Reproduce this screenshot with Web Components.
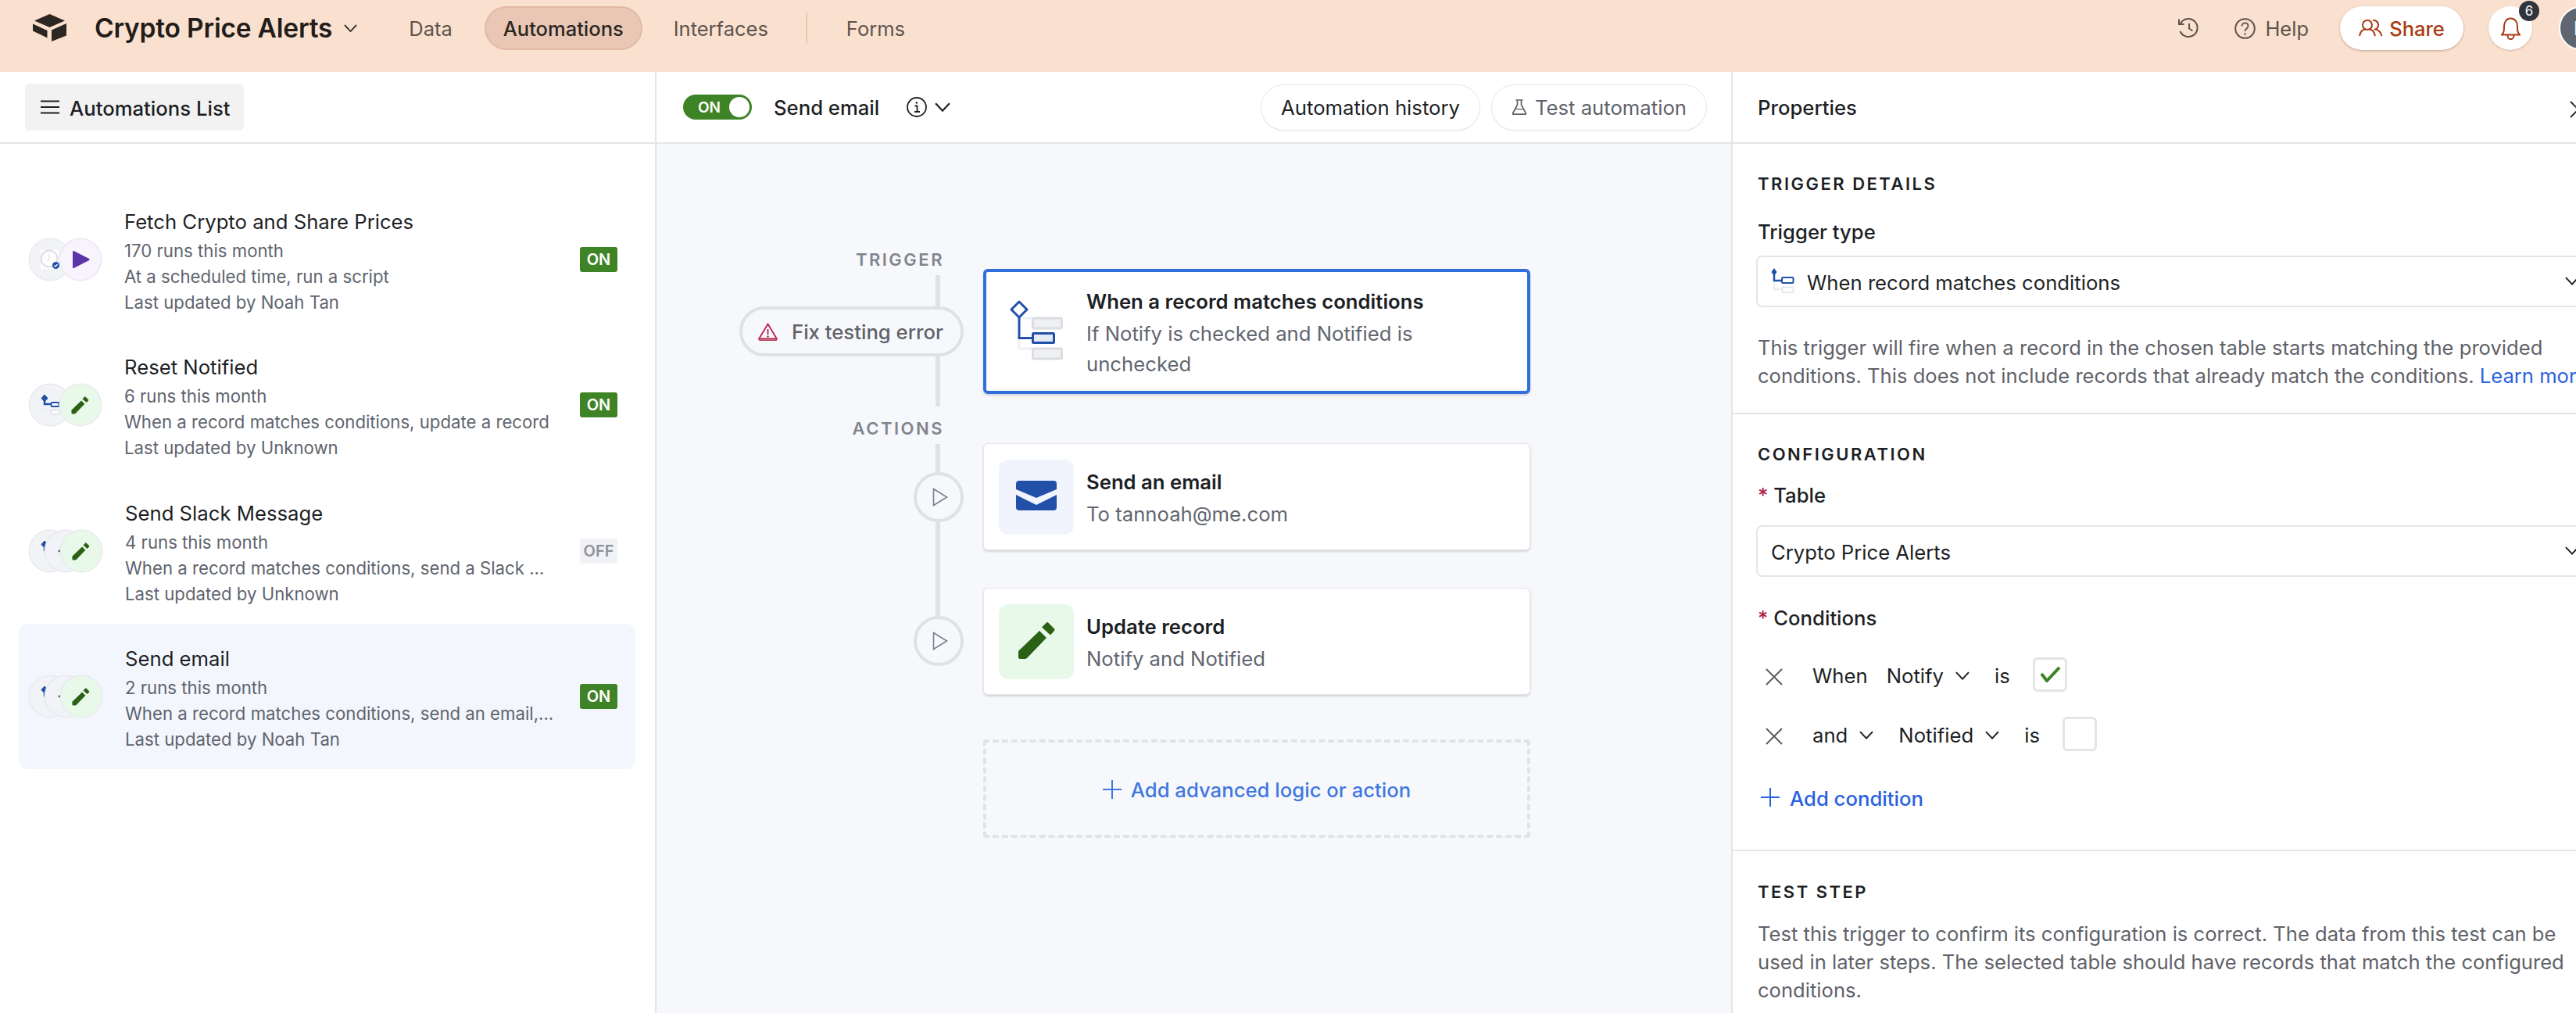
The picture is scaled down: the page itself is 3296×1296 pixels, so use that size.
<!DOCTYPE html>
<html lang="en">
<head>
<meta charset="utf-8">
<title>Crypto Price Alerts - Automations</title>
<style>
  html, body { margin: 0; height: 100%; overflow: hidden; background: #fff; }
  body { font-family: Inter, "Noto Sans", sans-serif; color: #1d1f25; }
</style>
</head>
<body>
<app-shell></app-shell>

<script>
const chev = (c = 'currentColor', w = 18) => `<svg width="${w}" height="${w * 0.62}" viewBox="0 0 18 11" fill="none" stroke="${c}" stroke-width="2"><path d="M1 1l8 8.5L17 1"/></svg>`;

const cross = (c = '#55585f') => `<svg width="22" height="22" viewBox="0 0 22 22" fill="none" stroke="${c}" stroke-width="1.8"><path d="M1 1l20 20M21 1L1 21"/></svg>`;

const plus = (c, s = 24) => `<svg width="${s}" height="${s}" viewBox="0 0 24 24" fill="none" stroke="${c}" stroke-width="2"><path d="M12 0v24M0 12h24"/></svg>`;

const pencil = (s = 52) => `<svg width="${s}" height="${s * 56 / 52}" viewBox="0 0 52 56" fill="#2a6114"><path d="M3 49v-7l27-26 9 9-25 26q-1 1-3 1H5q-2 0-2-3z"/><path d="M39 5.500q1-1 2.200 0L49 13.500q1 1.200 0 2.500l-5 5.500-11-10z"/></svg>`;

const flowMini = (s = 52) => `<svg width="${s}" height="${s}" viewBox="0 0 52 52" fill="none">
  <path d="M19 22v11h8" stroke="#eceef3" stroke-width="2"/>
  <rect x="27.500" y="33" width="10" height="5" rx="1" fill="#fff" stroke="#e0e1e6" stroke-width="1.500"/>
  <path d="M19 18v7h8" stroke="#2050a8" stroke-width="2.500"/>
  <path d="M19 13l4 4.500-4 4.500-4-4.500z" fill="#2050a8" stroke="#2050a8"/>
  <rect x="27.500" y="23" width="10" height="5" rx="1" fill="#fff" stroke="#2050a8" stroke-width="1.800"/>
</svg>`;

const flowSelect = `<svg width="32" height="32" viewBox="0 0 32 32" fill="none">
  <path d="M6 18v9h10" stroke="#eceef3" stroke-width="2.500"/>
  <rect x="16.500" y="24.500" width="14" height="6.500" rx="1" fill="#fff" stroke="#e0e1e6" stroke-width="1.500"/>
  <path d="M6 6v10h10" stroke="#2050a8" stroke-width="2.500"/>
  <path d="M6 0l3.500 5L6 10 2.500 5z" fill="#2050a8"/>
  <rect x="16" y="12" width="14.500" height="7" rx="1" fill="#fff" stroke="#2050a8" stroke-width="2"/>
</svg>`;

const icons = {
  logo: `<svg width="43" height="35" viewBox="0 0 43 35" fill="#2b2622"><path d="M21.500 0L41 8.500 21.500 17 2 8.500z"/><path d="M0 12.500l18.500 8.500v9.500L0 21.500z"/><path d="M24 20.500L43 12v15.500L24 35z"/></svg>`,
  history: `<svg width="28" height="26" viewBox="0 0 28 26" fill="none" stroke="#5d534c" stroke-width="2"><path d="M4 7A11.500 11.500 0 1 1 3.500 17"/><path d="M2 1.500V8h6.500"/><path d="M15 7v6.500l4.500 3"/></svg>`,
  help: `<svg width="27" height="27" viewBox="0 0 27 27" fill="none" stroke="#5d534c" stroke-width="2"><circle cx="13.500" cy="13.500" r="12.300"/><path d="M9.500 10.500c0-5.500 8-5.500 8 0 0 3-4 3-4 6.500" stroke-width="1.800"/><circle cx="13.500" cy="20.500" r="1.200" fill="#5d534c" stroke="none"/></svg>`,
  share: `<svg width="31" height="22" viewBox="0 0 31 22" fill="none" stroke="#a93a12" stroke-width="2"><circle cx="11" cy="7" r="6"/><path d="M1 21c1-5 4-8 7-8.500M21 21c-1-5-4-8-7-8.500"/><path d="M18 1.200c4-.8 7 2 7 5.800 0 2.500-1.500 4.500-3.500 5.500 3 .5 7 3.500 8 8.500"/></svg>`,
  bell: `<svg width="25" height="32" viewBox="0 0 25 32" fill="none" stroke="#a93a12" stroke-width="2"><path d="M1 24.500c3-3 3-6 3-11 0-5.500 3.500-10 8.500-10s8.500 4.500 8.500 10c0 5 0 8 3 11z"/><path d="M8.500 25c0 7 8 7 8 0"/></svg>`,
  menu: `<svg width="24" height="18" viewBox="0 0 24 18" fill="none" stroke="#1d1f25" stroke-width="2"><path d="M0 1.500h24M0 9h24M0 16.500h24"/></svg>`,
  info: `<svg width="26" height="26" viewBox="0 0 26 26" fill="none" stroke="#1d1f25" stroke-width="1.800"><circle cx="13" cy="13" r="12"/><path d="M10.500 11.500H13.500V19M10 19h7"/><circle cx="12.800" cy="7.500" r="1.200" fill="#1d1f25" stroke="none"/></svg>`,
  flask: `<svg width="20" height="20" viewBox="0 0 20 20" fill="none" stroke="#5f6269" stroke-width="1.700"><path d="M5.500 1h9M7.500 1v6L1.500 18.300q0 .9 1 .9h15q1 0 1-.9L12.500 7V1"/><path d="M4.500 13c3-2 6 1.500 11-.5" stroke-width="1.300"/></svg>`,
  warn: `<svg width="25" height="23" viewBox="0 0 25 23" fill="none" stroke="#b4234a" stroke-width="1.800"><path d="M12.500 1.500L24 20.500H1z"/><path d="M12.500 8v7"/><circle cx="12.500" cy="17.500" r="1.200" fill="#b4234a" stroke="none"/><path d="M1 22.300h23" stroke-width="1.200"/></svg>`,
  play: `<svg width="20" height="24" viewBox="0 0 20 24" fill="none" stroke="#7b7e86" stroke-width="1.600"><path d="M1.500 1.500L18.500 12 1.500 22.500z"/></svg>`,
  envelope: `<svg width="52" height="38" viewBox="0 0 52 38" fill="#2250a8"><path d="M4 0h44a4 4 0 0 1 4 4v7L26 22 0 11V4a4 4 0 0 1 4-4z"/><path d="M0 18l26 13 26-13v16a4 4 0 0 1-4 4H4a4 4 0 0 1-4-4z"/></svg>`,
  trigger: `<svg width="70" height="80" viewBox="0 0 70 80" fill="none">
    <path d="M13 25h17M13 50v14h17" stroke="#f0f1f5" stroke-width="3"/>
    <rect x="30.500" y="25" width="37" height="13" rx="1.500" fill="#eff0f4" stroke="#dcdde1" stroke-width="3"/>
    <rect x="30.500" y="64" width="37" height="13" rx="1.500" fill="#eff0f4" stroke="#dcdde1" stroke-width="3"/>
    <path d="M13 24v26.500h17" stroke="#2050a8" stroke-width="3"/>
    <path d="M13 4l10 10-10 10L3 14z" fill="#fff" stroke="#2050a8" stroke-width="3" stroke-linejoin="round"/>
    <rect x="30.500" y="44.500" width="27" height="12" rx="1" fill="#e6eaf5" stroke="#2050a8" stroke-width="3"/>
  </svg>`,
  clock: `<svg width="52" height="52" viewBox="0 0 52 52" fill="none">
    <rect x="14" y="14" width="23" height="24" fill="#fff"/>
    <circle cx="25" cy="25" r="10.500" stroke="#dedfe3" stroke-width="2"/>
    <path d="M25 18v7l-2.500 3" stroke="#dedfe3" stroke-width="1.200"/>
    <circle cx="33.500" cy="33.500" r="4.500" fill="#2050a8"/>
    <path d="M31.500 33.500l1.500 1.500 2.500-3" stroke="#fff" stroke-width="1.200"/>
  </svg>`,
  playFill: `<svg width="52" height="52" viewBox="0 0 52 52" fill="#5b35a8"><path d="M16 16q0-1.500 1.500-1L37 25q1.500 1 0 2L17.500 37q-1.500.5-1.500-1z"/></svg>`,
  dot: `<svg width="52" height="52" viewBox="0 0 52 52" fill="#3a3d44"><circle cx="18" cy="26" r="1.400"/></svg>`,
  check: `<svg width="28" height="20" viewBox="0 0 28 20" fill="none" stroke="#3f8327" stroke-width="4"><path d="M3 9l7 9L26 1"/></svg>`,
};
icons.pencilMini = `<svg width="52" height="52" viewBox="0 0 52 52" style="display:block"><g transform="translate(13 13) scale(.47)">${pencil().replace(/<\/?svg[^>]*>/g, '').replace(/<path /g, '<path fill="#2a6114" ')}</g></svg>`;

/* top bar */

customElements.define('nav-tab', class NavTab extends HTMLElement {
  constructor() {
    super();
    this.attachShadow({ mode: 'open' }).innerHTML = `
      <style>
        :host { display: block; }
        div {
          height: 56px; display: flex; align-items: center; padding: 0 24px;
          box-sizing: border-box; border-radius: 28px; font-size: 25.500px; color: #5d534c;
        }
        :host([active]) div {
          background: #eac7b5; color: #2b2622; font-weight: 500;
          border: 2px solid #e2baa6;
          padding: 0 22px;
        }
      </style>
      <div><slot></slot></div>`;
  }
});

customElements.define('top-bar', class TopBar extends HTMLElement {
  constructor() {
    super();
    this.attachShadow({ mode: 'open' }).innerHTML = `
      <style>
        :host {
          display: flex; align-items: flex-start; height: 92px; box-sizing: border-box;
          padding: 8px 0 0 42px; background: #fae0cf; white-space: nowrap; overflow: hidden;
        }
        .logo { margin: 10px 36px 0 0; height: 35px; }
        .title { display: flex; align-items: center; gap: 15px; height: 56px; font-size: 33.500px; font-weight: 600; letter-spacing: -.2px; color: #221d1a; margin-right: 66px; }
        .tabs { display: flex; align-items: center; }
        .tabs nav-tab:nth-child(1) { margin-left: -24px; }
        .tabs nav-tab:nth-child(2) { margin: 0 16px 0 17px; }
        .sep { width: 2px; height: 40px; background: #e6c8b6; margin: 0 26px 0 24px; }
        .right { margin-left: auto; display: flex; align-items: center; height: 56px; color: #5d534c; font-size: 25.500px; }
        .help { display: flex; align-items: center; gap: 12px; margin: 0 40px 0 45px; }
        .share {
          width: 158px; height: 56px; box-sizing: border-box; display: flex; align-items: center; justify-content: center;
          gap: 8px; background: #fff; border-radius: 28px; color: #a93a12; font-weight: 500;
          box-shadow: 0 1px 3px rgba(90,50,30,.35);
        }
        .bell-wrap { position: relative; width: 56px; height: 56px; margin: 0 34px 0 32px; }
        .bell {
          width: 56px; height: 56px; border-radius: 50%; background: #fff; display: flex;
          align-items: center; justify-content: center; box-shadow: 0 1px 2px rgba(90,50,30,.25);
        }
        .badge {
          position: absolute; left: 39px; top: -7px; width: 26px; height: 26px; border-radius: 50%;
          background: #31343d; color: #fff; font-size: 17px; display: flex; align-items: center; justify-content: center;
        }
        .avatar {
          width: 56px; height: 56px; box-sizing: border-box; flex: none; border-radius: 50%; background: #5f6672;
          border: 2px solid #fff; color: #fff; font-size: 24px; display: flex; align-items: center; justify-content: center;
        }
        .clip { width: 22px; overflow: hidden; }
      </style>
      <span class="logo">${icons.logo}</span>
      <div class="title">Crypto Price Alerts ${chev('#3a3431', 17)}</div>
      <div class="tabs">
        <nav-tab>Data</nav-tab>
        <nav-tab active>Automations</nav-tab>
        <nav-tab>Interfaces</nav-tab>
        <span class="sep"></span>
        <nav-tab>Forms</nav-tab>
      </div>
      <div class="right">
        ${icons.history}
        <span class="help">${icons.help} Help</span>
        <span class="share">${icons.share} Share</span>
        <span class="bell-wrap"><span class="bell">${icons.bell}</span><span class="badge">6</span></span>
        <span class="clip"><span class="avatar">N</span></span>
      </div>`;
  }
});

/* left list */

customElements.define('icon-stack', class IconStack extends HTMLElement {
  connectedCallback() {
    const names = this.getAttribute('icons').split(',');
    const step = names.length > 2 ? -32 : -13;
    const tints = { playFill: '#f8f3fd', pencilMini: '#e9f9e9' };
    this.attachShadow({ mode: 'open' }).innerHTML = `
      <style>
        :host { display: flex; }
        span {
          width: 52px; height: 52px; border-radius: 50%; flex: none; overflow: hidden;
          box-shadow: 0 0 0 1.500px #e9eaee;
        }
        span + span { margin-left: ${step}px; }
        svg { display: block; }
      </style>
      ${names.map(n => `<span style="background:${tints[n] || '#f2f3f7'}">${n === 'flow' ? flowMini() : icons[n]}</span>`).join('')}`;
  }
});

customElements.define('automation-item', class AutomationItem extends HTMLElement {
  connectedCallback() {
    const on = this.getAttribute('state') === 'on';
    this.attachShadow({ mode: 'open' }).innerHTML = `
      <style>
        :host {
          display: flex; align-items: center; height: 186px; box-sizing: border-box;
          padding: 0 23px 0 14px; border-radius: 12px; white-space: nowrap;
        }
        :host([selected]) { background: #f3f6fc; }
        icon-stack { width: var(--icon-w, 121px); flex: none; }
        .text { flex: 1; min-width: 0; padding-top: 4px; font-size: 22.200px; line-height: 33px; color: #60646e; }
        .name { font-size: 25.700px; line-height: 38px; color: #1d1f25; margin-bottom: 1px; display: block; }
        .badge {
          width: 48px; height: 32px; flex: none; border-radius: 3px; font-size: 20px; font-weight: 600;
          display: flex; align-items: center; justify-content: center;
          background: ${on ? '#3f8327' : '#f1f2f6'}; color: ${on ? '#fff' : '#8f9299'};
        }
      </style>
      <icon-stack icons="${this.getAttribute('icons')}"></icon-stack>
      <div class="text"><span class="name"><slot name="name"></slot></span><slot></slot></div>
      <span class="badge">${on ? 'ON' : 'OFF'}</span>`;
  }
});

customElements.define('automations-panel', class AutomationsPanel extends HTMLElement {
  constructor() {
    super();
    this.attachShadow({ mode: 'open' }).innerHTML = `
      <style>
        :host { display: block; width: 840px; flex: none; box-sizing: border-box; border-right: 2px solid #e5e5e5; }
        header { height: 92px; box-sizing: border-box; padding: 15px 32px; border-bottom: 2px solid #e5e5e5; }
        .btn {
          width: 280px; height: 60px; display: flex; align-items: center; gap: 13px; padding-left: 20px;
          box-sizing: border-box; background: #f2f2f2; border-radius: 6px; font-size: 25.700px; font-weight: 500;
        }
        .btn span { padding-top: 3px; }
        .list { padding: 55px 25px 0 24px; }
      </style>
      <header><div class="btn">${icons.menu}<span>Automations List</span></div></header>
      <div class="list"><slot></slot></div>`;
  }
});

/* middle column */

customElements.define('pill-button', class PillButton extends HTMLElement {
  constructor() {
    super();
    this.attachShadow({ mode: 'open' }).innerHTML = `
      <style>
        :host {
          display: flex; align-items: center; gap: 10px; height: 57px; padding: 0 25px; box-sizing: border-box;
          border-radius: 29px; background: #fff; font-size: 25.700px; white-space: nowrap;
          box-shadow: 0 0 0 1px #e6e6e8, 0 1px 2px rgba(0,0,0,.12);
        }
        :host([muted]) { color: #5f6269; }
      </style>
      <slot></slot>`;
  }
});

customElements.define('flow-card', class FlowCard extends HTMLElement {
  constructor() {
    super();
    this.attachShadow({ mode: 'open' }).innerHTML = `
      <style>
        :host {
          display: flex; align-items: center; box-sizing: border-box; background: #fff; width: 700px;
          height: 137px; padding-left: 19px; border: 1px solid #e3e4e8; border-radius: 6px;
          box-shadow: 0 2px 3px rgba(0,0,0,.14);
        }
        :host([selected]) { height: 160px; border: 4px solid #2f6fdb; padding-left: 16px; }
        .tile {
          width: 96px; height: 96px; flex: none; border-radius: 12px; display: flex;
          align-items: center; justify-content: center; background: var(--tile, transparent);
        }
        .text { padding-left: 16px; font-size: 25.700px; line-height: 39px; color: #616670; }
        .name { display: block; color: #1d1f25; font-weight: 600; line-height: 43px; }
      </style>
      <div class="tile"><slot name="icon"></slot></div>
      <div class="text"><span class="name"><slot name="name"></slot></span><slot></slot></div>`;
  }
});

customElements.define('automation-canvas', class AutomationCanvas extends HTMLElement {
  constructor() {
    super();
    this.attachShadow({ mode: 'open' }).innerHTML = `
      <style>
        :host {
          display: block; width: 1377px; flex: none; box-sizing: border-box; border-right: 2px solid #e5e5e5;
        }
        header {
          height: 92px; box-sizing: border-box; border-bottom: 2px solid #e5e5e5; background: #fff;
          display: flex; align-items: center; padding: 0 32px 0 34px;
        }
        .toggle {
          width: 88px; height: 32px; border-radius: 16px; background: #3f8327; color: #fff; font-size: 19px; font-weight: 600;
          display: flex; align-items: center; justify-content: space-between; padding: 0 3px 0 19px; box-sizing: border-box; flex: none;
        }
        .toggle i { width: 26px; height: 26px; border-radius: 50%; background: #fff; display: block; }
        .name { font-size: 25.700px; font-weight: 500; margin-left: 28px; }
        .info { display: flex; align-items: center; gap: 10px; margin-left: 35px; }
        .btns { margin-left: auto; display: flex; gap: 16px; }
        .body { display: flex; height: 1112px; background: #f7f8fc; gap: 25px; }
        .rail { width: 393px; flex: none; display: flex; flex-direction: column; align-items: flex-end; padding-top: 134px; box-sizing: border-box; }
        .label { font-size: 22px; line-height: 24px; font-weight: 600; letter-spacing: 2.500px; color: #82858d; margin-right: 25px; padding-top: 2px; margin-bottom: -2px; }
        .line { width: 6px; background: #e0e1e5; margin-right: 30px; }
        .fix {
          width: 287px; height: 64px; box-sizing: border-box; border: 4px solid #e0e1e5; border-radius: 32px; background: #f7f8fc;
          display: flex; align-items: center; gap: 18px; padding-left: 20px; font-size: 25.700px; font-weight: 500; color: #5f6269;
        }
        .play {
          width: 64px; height: 64px; box-sizing: border-box; border: 4px solid #e0e1e5; border-radius: 50%; background: #f7f8fc;
          display: flex; align-items: center; justify-content: center; padding-left: 3px;
        }
        .cards { padding-top: 160px; display: flex; flex-direction: column; align-items: flex-start; }
        .add {
          width: 700px; height: 126px; box-sizing: border-box; border: 4px dashed #e2e3e8; border-radius: 4px; margin-top: 57px; padding-top: 2px;
          display: flex; align-items: center; justify-content: center; gap: 12px; font-size: 25.700px; font-weight: 500; color: #3f78e0;
        }
      </style>
      <header>
        <div class="toggle">ON<i></i></div>
        <span class="name">Send email</span>
        <span class="info">${icons.info}${chev('#1d1f25', 20)}</span>
        <div class="btns">
          <pill-button>Automation history</pill-button>
          <pill-button muted>${icons.flask} Test automation</pill-button>
        </div>
      </header>
      <div class="body">
        <div class="rail">
          <span class="label">TRIGGER</span>
          <span class="line" style="height:40px;margin-top:10px"></span>
          <div class="fix">${icons.warn} Fix testing error</div>
          <span class="line" style="height:64px"></span>
          <span class="label" style="margin-top:14px">ACTIONS</span>
          <span class="line" style="height:36px;margin-top:10px"></span>
          <div class="play">${icons.play}</div>
          <span class="line" style="height:120px"></span>
          <div class="play">${icons.play}</div>
        </div>
        <div class="cards">
          <flow-card selected>
            <span slot="icon">${icons.trigger}</span>
            <span slot="name">When a record matches conditions</span>
            If Notify is checked and Notified is<br>unchecked
          </flow-card>
          <flow-card style="margin-top:63px;--tile:#f1f4fd">
            <span slot="icon">${icons.envelope}</span>
            <span slot="name">Send an email</span>
            To tannoah@me.com
          </flow-card>
          <flow-card style="margin-top:48px;--tile:#e9f9e9">
            <span slot="icon">${pencil()}</span>
            <span slot="name">Update record</span>
            Notify and Notified
          </flow-card>
          <div class="add">${plus('#3f78e0')} Add advanced logic or action</div>
        </div>
      </div>`;
  }
});

/* right column */

customElements.define('select-box', class SelectBox extends HTMLElement {
  constructor() {
    super();
    this.attachShadow({ mode: 'open' }).innerHTML = `
      <style>
        :host {
          display: flex; align-items: center; height: 66px; box-sizing: border-box; margin-left: -2px;
          border: 2.500px solid #e5e5e5; border-radius: 8px; padding: 0 18px 0 15px; font-size: 25.700px;
        }
        .val { flex: 1; display: flex; align-items: center; gap: 16px; padding-top: 3px; }
        ::slotted(svg) { display: block; margin-top: -5px; }
      </style>
      <div class="val"><slot></slot></div>${chev('#1d1f25', 18)}`;
  }
});

customElements.define('condition-row', class ConditionRow extends HTMLElement {
  constructor() {
    super();
    this.attachShadow({ mode: 'open' }).innerHTML = `
      <style>
        :host { display: flex; align-items: center; height: 44px; padding-left: 10px; font-size: 25.700px; white-space: nowrap; }
        .x { display: block; margin-right: 38px; height: 22px; }
        ::slotted(span) { padding-top: 3px; }
      </style>
      <span class="x">${cross()}</span><slot></slot>`;
  }
});

customElements.define('check-box', class CheckBox extends HTMLElement {
  constructor() {
    super();
    this.attachShadow({ mode: 'open' }).innerHTML = `
      <style>
        :host {
          display: flex; align-items: center; justify-content: center; width: 44px; height: 44px; box-sizing: border-box;
          border: 3px solid #e5e5e5; border-radius: 6px; margin-left: 29px;
        }
      </style>
      <slot></slot>`;
  }
});

customElements.define('properties-panel', class PropertiesPanel extends HTMLElement {
  constructor() {
    super();
    this.attachShadow({ mode: 'open' }).innerHTML = `
      <style>
        :host { display: block; width: 1135px; flex: none; background: #fff; }
        header {
          height: 92px; box-sizing: border-box; border-bottom: 2px solid #e5e5e5; display: flex; align-items: center;
          padding-left: 32px; font-size: 25.700px; font-weight: 500;
        }
        header span { margin-left: auto; margin-right: 42px; height: 22px; }
        section { padding: 39px 32px 0; border-bottom: 2px solid #e5e5e5; }
        h2 { margin: 0; font-size: 22px; line-height: 24px; font-weight: 600; letter-spacing: 2.500px; color: #1d1f25; }
        .lbl { font-size: 25.700px; line-height: 32px; font-weight: 500; }
        .lbl b { color: #b4234a; font-weight: 500; }
        p { margin: 0; font-size: 25.600px; line-height: 36px; color: #5f6269; }
        a { color: #2a62dd; }
        .add { display: flex; align-items: center; gap: 13px; margin: 44px 0 0 4px; height: 32px; font-size: 25.700px; font-weight: 500; color: #2a62dd; }
        .add svg { margin-top: -2px; }
        svg { flex: none; }
        .m15 { margin-left: 15px; }
        .m24 { margin-left: 24px; }
        .m32 { margin-left: 32px; }
      </style>
      <header>Properties<span>${cross('#1d1f25')}</span></header>
      <section style="height:346px;box-sizing:border-box">
        <h2>TRIGGER DETAILS</h2>
        <div class="lbl" style="margin-top:34px">Trigger type</div>
        <select-box style="margin-top:14px">${flowSelect}When record matches conditions</select-box>
        <p style="margin-top:34px">This trigger will fire when a record in the chosen table starts matching the provided conditions. This does not include records that already match the conditions. <a>Learn more</a></p>
      </section>
      <section style="height:559px;box-sizing:border-box">
        <h2>CONFIGURATION</h2>
        <div class="lbl" style="margin-top:25px"><b>*</b> Table</div>
        <select-box style="margin-top:22px;padding-left:17px">Crypto Price Alerts</select-box>
        <div class="lbl" style="margin-top:37px"><b>*</b> Conditions</div>
        <condition-row style="margin-top:34px">
          <span>When</span><span class="m24">Notify</span><span class="m15" style="display:flex">${chev('#1d1f25')}</span><span class="m32">is</span>
          <check-box>${icons.check}</check-box>
        </condition-row>
        <condition-row style="margin-top:32px">
          <span>and</span><span class="m15" style="display:flex">${chev('#1d1f25')}</span><span class="m32">Notified</span><span class="m15" style="display:flex">${chev('#1d1f25')}</span><span class="m32">is</span>
          <check-box></check-box>
        </condition-row>
        <div class="add">${plus('#2a62dd')} Add condition</div>
      </section>
      <section style="border:0;padding-top:40px">
        <h2>TEST STEP</h2>
        <p style="margin-top:24px">Test this trigger to confirm its configuration is correct. The data from this test can be used in later steps. The selected table should have records that match the configured conditions.</p>
      </section>`;
  }
});

customElements.define('app-shell', class AppShell extends HTMLElement {
  constructor() {
    super();
    this.attachShadow({ mode: 'open' }).innerHTML = `
      <style>
        :host { display: block; width: 3296px; height: 1296px; overflow: hidden; }
        .main { display: flex; height: 1204px; }
        .t { display: block; }
      </style>
      <top-bar></top-bar>
      <div class="main">
        <automations-panel>
          <automation-item state="on" icons="clock,playFill">
            <span slot="name">Fetch Crypto and Share Prices</span>
            <span class="t">170 runs this month</span><span class="t">At a scheduled time, run a script</span><span class="t">Last updated by Noah Tan</span>
          </automation-item>
          <automation-item state="on" icons="flow,pencilMini">
            <span slot="name">Reset Notified</span>
            <span class="t">6 runs this month</span><span class="t">When a record matches conditions, update a record</span><span class="t">Last updated by Unknown</span>
          </automation-item>
          <automation-item state="off" icons="flow,dot,pencilMini" style="--icon-w:122px;margin-top:1px">
            <span slot="name">Send Slack Message</span>
            <span class="t">4 runs this month</span><span class="t">When a record matches conditions, send a Slack ...</span><span class="t">Last updated by Unknown</span>
          </automation-item>
          <automation-item state="on" icons="flow,dot,pencilMini" selected style="--icon-w:122px">
            <span slot="name">Send email</span>
            <span class="t">2 runs this month</span><span class="t">When a record matches conditions, send an email,...</span><span class="t">Last updated by Noah Tan</span>
          </automation-item>
        </automations-panel>
        <automation-canvas></automation-canvas>
        <properties-panel></properties-panel>
      </div>`;
  }
});
</script>
</body>
</html>
